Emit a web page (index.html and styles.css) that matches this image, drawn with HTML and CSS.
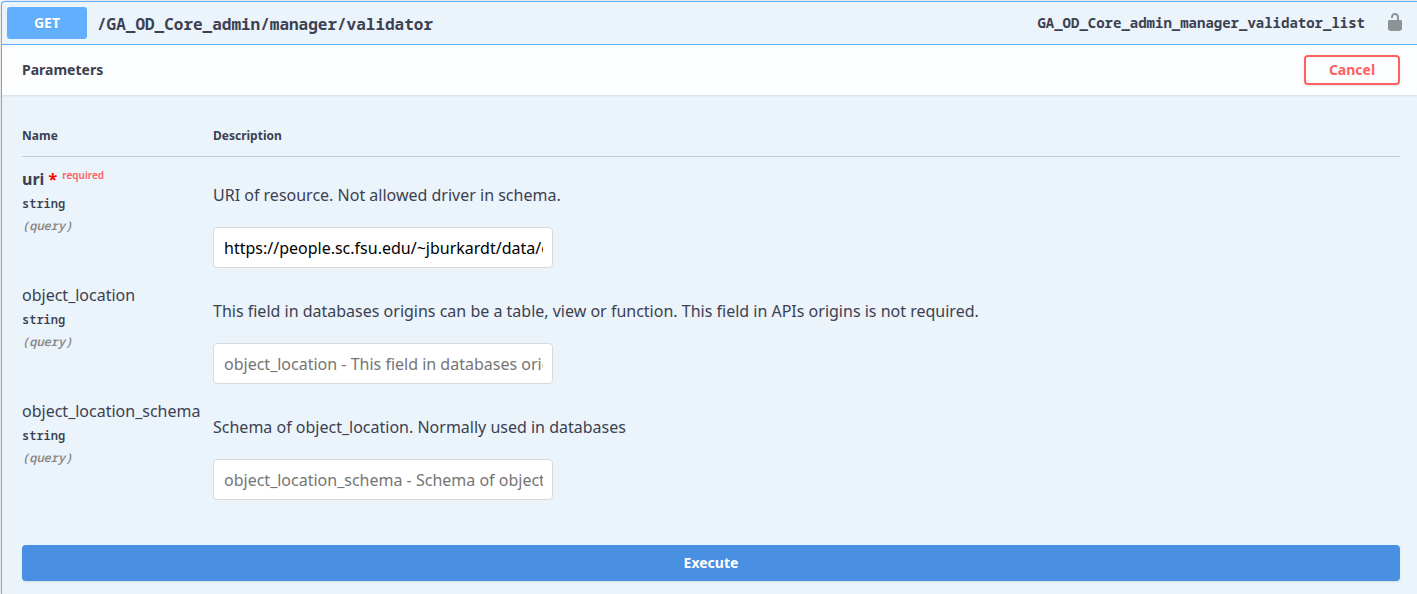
FILE: index.html
```html
<!DOCTYPE html>
<html lang="en">
<head>
<meta charset="utf-8">
<title>Validator</title>
<link rel="stylesheet" href="styles.css">
</head>
<body>
<main class="opblock">
  <div class="summary">
    <button class="method" type="button">GET</button>
    <span class="path">/GA_OD_Core_admin/manager/validator</span>
    <span class="operation-id">GA_OD_Core_admin_manager_validator_list</span>
    <button class="auth" type="button" aria-label="Authorization">
      <svg width="20" height="20" viewBox="0 0 20 20"><path fill="currentColor" d="M15.8 8H14V5.6C14 2.703 12.665 1 10 1 7.334 1 6 2.703 6 5.6V6h2v-.801C8 3.754 8.797 3 10 3c1.203 0 2 .754 2 2.199V8H4c-.553 0-1 .646-1 1.199V17c0 .549.428 1.139.951 1.307l1.197.387C5.672 18.861 6.55 19 7.1 19h5.8c.549 0 1.428-.139 1.951-.307l1.196-.387c.524-.167.953-.757.953-1.306V9.199C17 8.646 16.352 8 15.8 8z"/></svg>
    </button>
  </div>
  <header class="section-header">
    <h1 class="section-title">Parameters</h1>
    <button class="cancel" type="button">Cancel</button>
  </header>
  <form class="body">
    <table class="parameters">
      <thead>
        <tr><th class="name-col">Name</th><th>Description</th></tr>
      </thead>
      <tbody>
        <tr>
          <td><label class="param-name required" for="uri">uri <span class="star">*</span> <span class="flag">required</span></label><div class="type">string</div><div class="location">(query)</div></td>
          <td><p class="description">URI of resource. Not allowed driver in schema.</p><input class="field" id="uri" type="text" value="https://people.sc.fsu.edu/~jburkardt/data/csv/addresses.csv"></td>
        </tr>
        <tr>
          <td><label class="param-name" for="location">object_location</label><div class="type">string</div><div class="location">(query)</div></td>
          <td><p class="description">This field in databases origins can be a table, view or function. This field in APIs origins is not required.</p><input class="field" id="location" type="text" placeholder="object_location - This field in databases origins can be a table"></td>
        </tr>
        <tr>
          <td><label class="param-name" for="schema">object_location_schema</label><div class="type">string</div><div class="location">(query)</div></td>
          <td><p class="description">Schema of object_location. Normally used in databases</p><input class="field" id="schema" type="text" placeholder="object_location_schema - Schema of object_location. Normally used in databases"></td>
        </tr>
      </tbody>
    </table>
    <button class="execute" type="button">Execute</button>
  </form>
</main>
</body>
</html>
```

FILE: styles.css
```css
* { box-sizing: border-box; }
body {
  margin: 0;
  padding: 1px 0 0 1px;
  background: #fafafa;
  color: #3b4151;
  font-family: "Noto Sans", sans-serif;
  font-size: 16px;
}
button { font-family: inherit; cursor: pointer; }
.opblock {
  border: 1px solid #61affe;
  border-width: 1px 0 0 1px;
  border-radius: 4px 0 0 0;
  background: #ebf3fb;
  box-shadow: 0 0 3px rgba(0, 0, 0, .19);
}
.summary {
  display: flex;
  align-items: center;
  padding: 5px 12px 5px 5px;
  border-bottom: 1px solid #61affe;
}
.method {
  width: 80px;
  height: 32px;
  padding: 0 0 2px;
  border: 0;
  border-radius: 3px;
  background: #61affe;
  color: #fff;
  font-size: 14px;
  font-weight: 700;
  text-shadow: 0 1px 0 rgba(0, 0, 0, .1);
}
.path, .operation-id, .type, .location {
  font-family: "Noto Sans Mono", "DejaVu Sans Mono", monospace;
  font-weight: 600;
}
.path { flex: 1; padding: 2px 10px 0; font-weight: 700; }
.operation-id { padding-bottom: 2px; font-size: 14px; font-weight: 700; }
.auth {
  display: flex;
  margin-left: 20px;
  padding: 0 0 2px;
  border: 0;
  background: none;
  color: #8e9396;
}
.section-header {
  display: flex;
  align-items: center;
  justify-content: space-between;
  height: 50px;
  padding: 0 17px 0 20px;
  background: #fbfdfe;
  box-shadow: 0 1px 2px rgba(0, 0, 0, .1);
}
.section-title { margin: 0; padding-bottom: 2px; font-size: 14px; font-weight: 700; }
.cancel {
  width: 96px;
  height: 30px;
  padding: 0 0 2px;
  border: 2px solid #ff6060;
  border-radius: 4px;
  background: transparent;
  box-shadow: 0 1px 2px rgba(0, 0, 0, .1);
  color: #ff6060;
  font-size: 14px;
  font-weight: 700;
}
.body { padding: 20px 17px 13px 20px; }
.parameters { width: 100%; border-collapse: collapse; }
.parameters th {
  padding: 12px 0;
  border-bottom: 1px solid #c3ccda;
  font-size: 12px;
  line-height: 17px;
  text-align: left;
}
.parameters .name-col { width: 191px; }
.parameters td { height: 116px; padding: 10px 0 0; vertical-align: top; }
.param-name { display: block; line-height: 24px; }
.required { font-weight: 700; }
.star { color: #f00; }
.flag {
  margin-left: 1px;
  color: #ff6060;
  font-size: 10px;
  font-weight: 600;
  vertical-align: 6px;
  line-height: 10px;
}
.type { font-size: 12px; line-height: 26px; }
.location { color: #888; font-size: 12px; font-style: italic; line-height: 18px; }
.description { margin: 0; padding-top: 16px; line-height: 24px; }
.field {
  display: block;
  width: 340px;
  height: 41px;
  margin-top: 20px;
  padding: 1px 9px 0 10px;
  border: 1px solid #d9d9d9;
  border-radius: 4px;
  background: #fff;
  color: #000;
  font-family: inherit;
  font-size: 16px;
}
.field::placeholder { color: #757575; }
.execute {
  display: block;
  width: 100%;
  height: 36px;
  margin-top: 40px;
  padding: 0;
  border: 0;
  border-radius: 4px;
  background: #4990e2;
  box-shadow: 0 1px 2px rgba(0, 0, 0, .1);
  color: #fff;
  font-size: 14px;
  font-weight: 700;
}
```
